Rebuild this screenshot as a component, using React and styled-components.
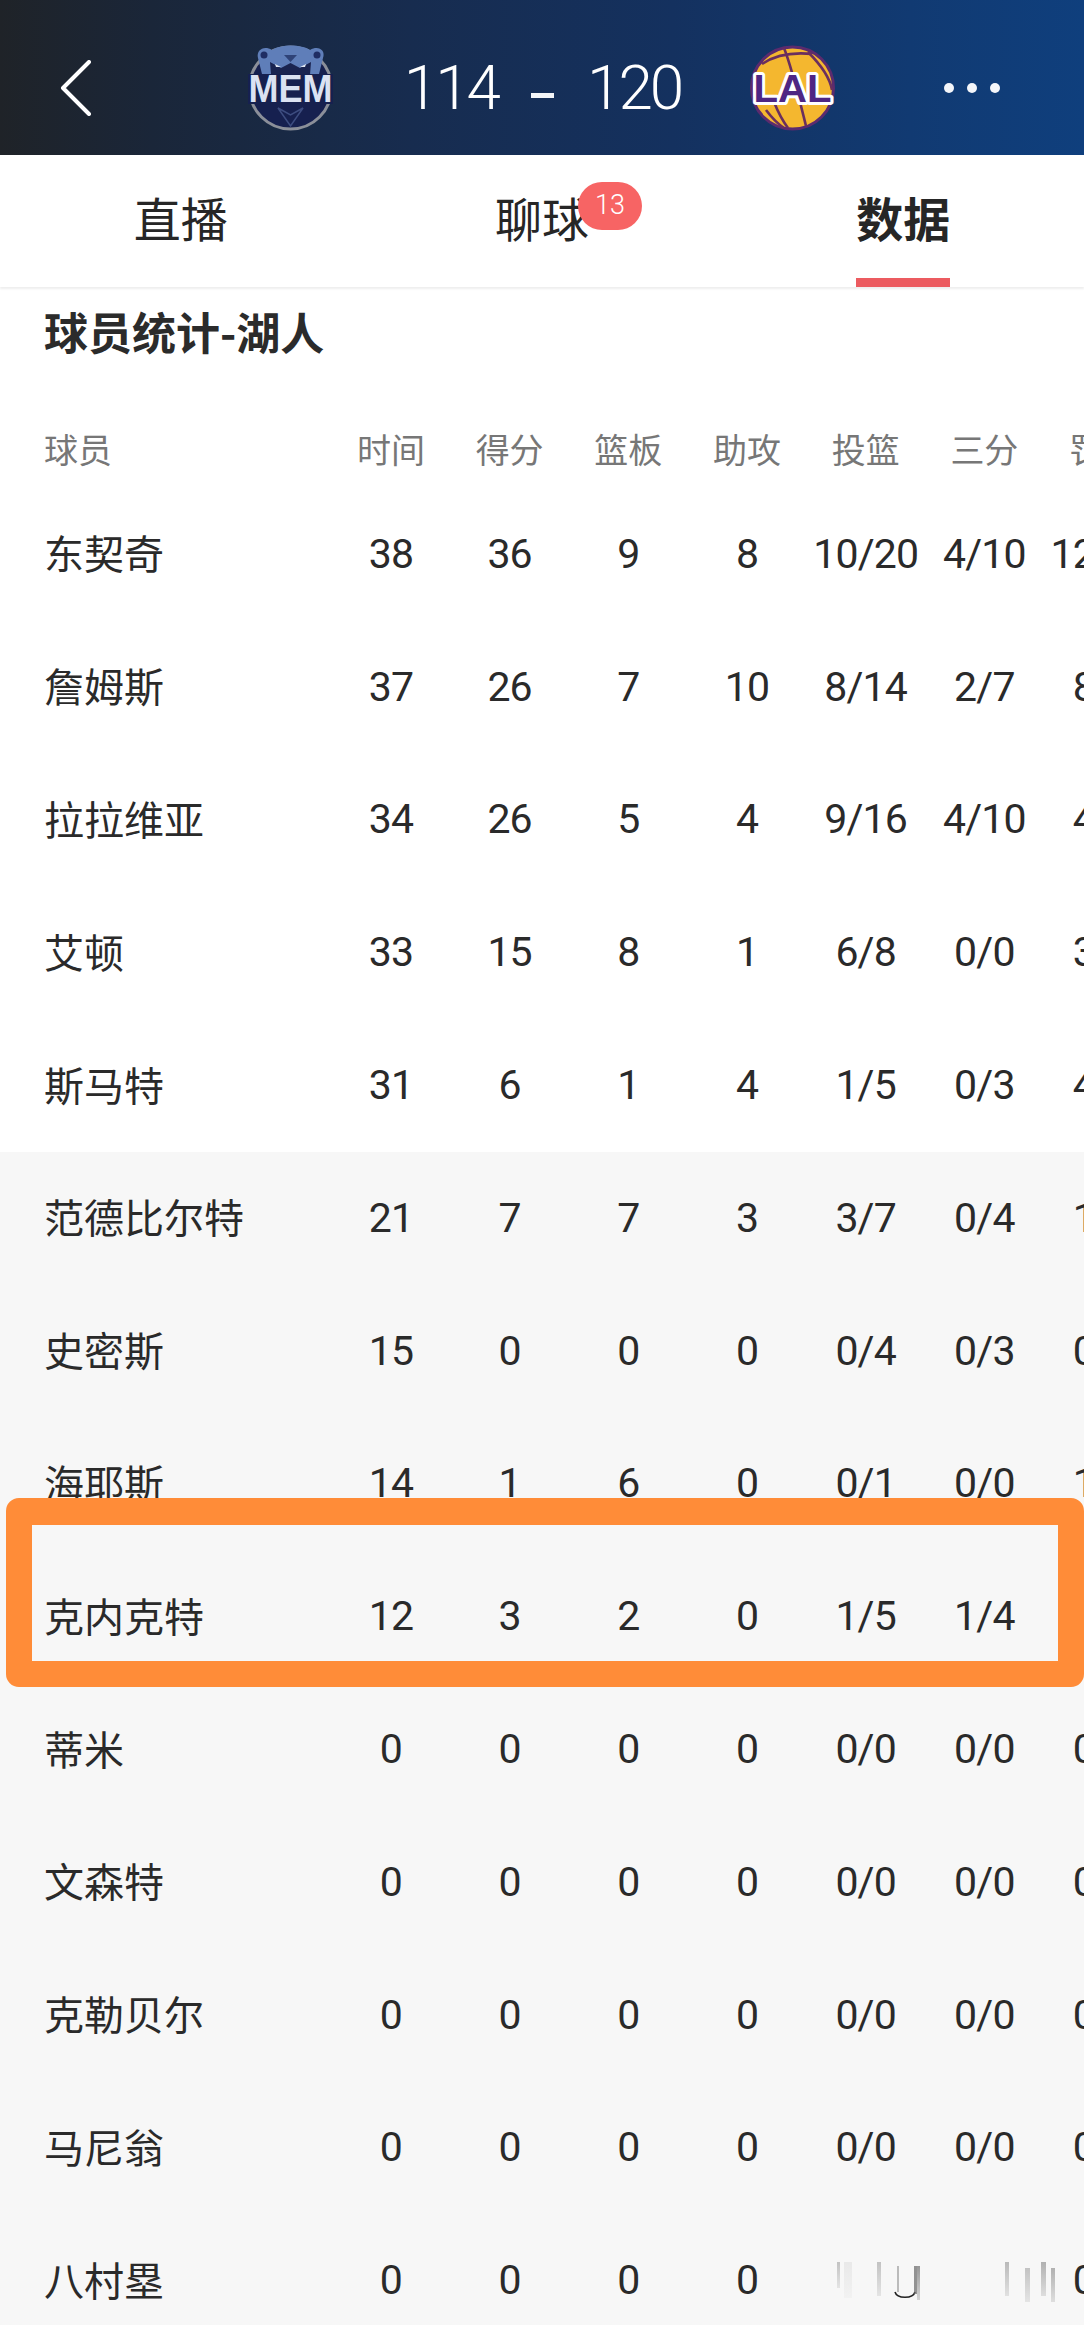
import React from "react";
import styled, { createGlobalStyle } from "styled-components";

const Global = createGlobalStyle`
  html, body { margin: 0; padding: 0; background: #fff; }
  body { font-family: Roboto, "Noto Sans CJK SC", sans-serif; }
`;

const CJK = `"Noto Sans CJK SC", "Noto Sans", sans-serif`;
const NUM = `Roboto, "Noto Sans CJK SC", sans-serif`;

const Page = styled.div`
  position: relative;
  width: 1084px;
  height: 2325px;
  overflow: hidden;
  background: #fff;
`;

const Header = styled.header`
  display: flex;
  align-items: center;
  height: 155px;
  box-sizing: border-box;
  padding-top: 21px;
  background: linear-gradient(90deg, #1f2328 0%, #1a2639 14%, #172c4f 38%, #14315f 62%, #113a72 84%, #0f3f7d 100%);
`;

const BackSlot = styled.div`
  flex: none;
  width: 248px;
  padding-left: 60px;
  box-sizing: border-box;
  display: flex;
  align-items: center;
`;

const Score = styled.div`
  flex: 1;
  display: flex;
  justify-content: center;
  align-items: center;
  gap: 33px;
  padding-left: 2px;
  color: #fff;
  font-family: ${NUM};
  font-weight: 300;
  font-size: 62px;
  line-height: 1;
  letter-spacing: -3px;
`;

const Dash = styled.span`
  display: block;
  width: 23px;
  height: 5px;
  margin-top: 14px;
  background: #f3f5f8;
`;

const MoreSlot = styled.div`
  flex: none;
  width: 249px;
  box-sizing: border-box;
  display: flex;
  gap: 13px;
  padding-left: 109px;
`;

const Dot = styled.span`
  width: 10px;
  height: 10px;
  border-radius: 50%;
  background: #f4f6fa;
`;

const LogoSlot = styled.div`
  flex: none;
  width: 85px;
  height: 92px;
`;

const Tabs = styled.nav`
  display: flex;
  height: 132px;
  background: #fff;
  box-shadow: 0 2px 2px #eeeeee;
  position: relative;
`;

const Tab = styled.div`
  flex: 1;
  display: flex;
  justify-content: center;
  position: relative;
  padding-top: 28px;
  font-family: ${CJK};
  font-size: 47px;
  line-height: 68px;
  font-weight: ${(p) => (p.$active ? 700 : 400)};
  color: #262626;
`;

const TabLabel = styled.span`
  position: relative;
  display: block;
  height: 104px;
`;

const Underline = styled.span`
  position: absolute;
  left: 0;
  right: 0;
  bottom: 0;
  height: 9px;
  background: #ec5b60;
`;

const Badge = styled.span`
  position: absolute;
  left: 83px;
  top: -1px;
  width: 64px;
  height: 48px;
  border-radius: 24px;
  background: #f76464;
  color: #fff;
  font-family: ${NUM};
  font-size: 27px;
  font-weight: 300;
  line-height: 46px;
  text-align: center;
`;

const Section = styled.h2`
  margin: 0;
  padding: 14px 0 0 44px;
  height: 94px;
  box-sizing: border-box;
  font-family: ${CJK};
  font-size: 44px;
  line-height: 60px;
  font-weight: 700;
  color: #2b2b2b;
`;

const Row = styled.div`
  display: grid;
  grid-template-columns: 287.6px repeat(7, 118.7px);
  align-items: center;
  box-sizing: border-box;
  padding-left: 44px;
  padding-top: ${(p) => (p.$head ? "28px" : "0")};
  width: max-content;
  height: ${(p) => (p.$head ? "107px" : "132.8px")};
`;

const Bench = styled.div`
  background: #f7f7f7;
`;

const Name = styled.div`
  font-family: ${CJK};
  font-size: 40px;
  line-height: 1;
  padding-bottom: 4px;
  color: #2a2a2a;
`;

const Stat = styled.div`
  text-align: center;
  font-family: ${NUM};
  font-size: 41px;
  line-height: 1;
  font-weight: 400;
  letter-spacing: -0.8px;
  color: #2a2a2a;
  white-space: nowrap;
`;

const HeadName = styled(Name)`
  font-size: 34px;
  padding-bottom: 0;
  color: #777;
`;

const HeadCell = styled(Stat)`
  font-family: ${CJK};
  font-size: 34px;
  letter-spacing: 0;
  color: #777;
`;

const Erased = styled.div`
  grid-column: span 2;
  height: 38px;
  margin-left: 23px;
  width: 234px;
`;

const Highlight = styled.div`
  position: absolute;
  left: 6px;
  right: 0;
  top: 1498px;
  height: 189px;
  box-sizing: border-box;
  border: solid #ff8c38;
  border-width: 27px 26px 26px 26px;
  border-radius: 13px;
  pointer-events: none;
`;

const Back = () => (
  <svg width="32" height="56" viewBox="0 0 32 56" fill="none">
    <path d="M29 2 L3 28 L29 54" stroke="#fff" strokeWidth="4" strokeLinecap="round" strokeLinejoin="round" />
  </svg>
);

const MemLogo = () => (
  <svg width="85" height="92" viewBox="0 0 85 92">
    <circle cx="42.5" cy="46" r="41" fill="#16204f" stroke="#8b8f99" strokeWidth="3" />
    <path d="M10 16 C8 8 16 3 24 8 C32 2 54 2 62 8 C70 3 78 8 75 16 L71 32 L14 32 Z" fill="#5f7eb9" />
    <circle cx="16" cy="13" r="3.5" fill="#1f2d63" />
    <circle cx="69" cy="13" r="3.5" fill="#1f2d63" />
    <path d="M22 20 L33 26 L42.5 21 L52 26 L63 20 L62 33 L23 33 Z" fill="#1a2450" />
    <path d="M36 13 H49 L42.5 20 Z" fill="#2f4378" />
    <path d="M27 22 L33 25 L28 25 Z M58 22 L52 25 L57 25 Z" fill="#dfe6f2" />
    <rect x="0" y="32" width="85" height="30" fill="#16204f" />
    <text x="42.5" y="60" textAnchor="middle" fontFamily="Liberation Sans" fontWeight="700" fontSize="38" fill="#dbe2f2" textLength="84" lengthAdjust="spacingAndGlyphs">MEM</text>
    <path d="M30 66 L42.5 84 L55 66 L42.5 73 Z" fill="none" stroke="#3d4d80" strokeWidth="1.5" />
  </svg>
);

const LalLogo = () => (
  <svg width="85" height="92" viewBox="0 0 85 92">
    <circle cx="42.5" cy="46" r="41" fill="#f4b72f" stroke="#5b2b6e" strokeWidth="3" />
    <g fill="none" stroke="#6a2f5e" strokeWidth="2.6">
      <path d="M12 22 C24 14 42 10 62 12" />
      <path d="M34 6 C42 26 50 60 56 84" />
      <path d="M58 10 C72 24 80 36 82 48" />
      <path d="M16 68 C22 76 28 82 34 86" />
      <path d="M24 60 C28 70 32 78 38 86" />
    </g>
    <text x="42.5" y="60" textAnchor="middle" fontFamily="Liberation Sans" fontWeight="700" fontSize="38" fill="#4f2683" stroke="#fff" strokeWidth="6" paintOrder="stroke" strokeLinejoin="round" textLength="78" lengthAdjust="spacingAndGlyphs">LAL</text>
  </svg>
);

const streaks = [
  [8, 3, 0.3, 0, 26],
  [15, 8, 0.08, 0, 36],
  [48, 4, 0.3, 0, 34],
  [88, 3, 0.55, 4, 34],
  [176, 4, 0.35, 0, 34],
  [196, 5, 0.3, 6, 34],
  [212, 5, 0.4, 0, 34],
  [222, 4, 0.4, 6, 34],
];

const Smudge = () => (
  <svg width="240" height="38" viewBox="0 0 240 38" style={{ overflow: "visible" }}>
    <defs>
      <linearGradient id="fade" x1="0" y1="0" x2="0" y2="1">
        <stop offset="0" stopColor="#444" stopOpacity="0.7" />
        <stop offset="1" stopColor="#444" stopOpacity="0.25" />
      </linearGradient>
    </defs>
    {streaks.map(([x, w, o, y, h]) => (
      <rect key={x} x={x} y={y} width={w} height={h} fill="url(#fade)" opacity={o * 1.4} />
    ))}
    <path d="M66 30 C68 37 84 37 86 30" fill="none" stroke="#222" strokeWidth="1.6" />
    <rect x="68" y="4" width="2" height="26" fill="#bbb" />
    <rect x="85" y="4" width="3" height="28" fill="#666" opacity="0.7" />
  </svg>
);

const cols = ["时间", "得分", "篮板", "助攻", "投篮", "三分", "罚球"];

const starters = [
  ["东契奇", 38, 36, 9, 8, "10/20", "4/10", "12/12"],
  ["詹姆斯", 37, 26, 7, 10, "8/14", "2/7", "8/8"],
  ["拉拉维亚", 34, 26, 5, 4, "9/16", "4/10", "4/4"],
  ["艾顿", 33, 15, 8, 1, "6/8", "0/0", "3/4"],
  ["斯马特", 31, 6, 1, 4, "1/5", "0/3", "4/4"],
];

const bench = [
  ["范德比尔特", 21, 7, 7, 3, "3/7", "0/4", "1/2"],
  ["史密斯", 15, 0, 0, 0, "0/4", "0/3", "0/0"],
  ["海耶斯", 14, 1, 6, 0, "0/1", "0/0", "1/2"],
  ["克内克特", 12, 3, 2, 0, "1/5", "1/4", "0/0"],
  ["蒂米", 0, 0, 0, 0, "0/0", "0/0", "0/0"],
  ["文森特", 0, 0, 0, 0, "0/0", "0/0", "0/0"],
  ["克勒贝尔", 0, 0, 0, 0, "0/0", "0/0", "0/0"],
  ["马尼翁", 0, 0, 0, 0, "0/0", "0/0", "0/0"],
];

const PlayerRow = ({ data }) => (
  <Row>
    <Name>{data[0]}</Name>
    {data.slice(1).map((v, i) => (
      <Stat key={i}>{v}</Stat>
    ))}
  </Row>
);

export default function App() {
  return (
    <Page>
      <Global />
      <Header>
        <BackSlot>
          <Back />
        </BackSlot>
        <LogoSlot>
          <MemLogo />
        </LogoSlot>
        <Score>
          <span>114</span>
          <Dash />
          <span>120</span>
        </Score>
        <LogoSlot>
          <LalLogo />
        </LogoSlot>
        <MoreSlot>
          <Dot />
          <Dot />
          <Dot />
        </MoreSlot>
      </Header>
      <Tabs>
        <Tab>
          <TabLabel>直播</TabLabel>
        </Tab>
        <Tab>
          <TabLabel>
            聊球
            <Badge>13</Badge>
          </TabLabel>
        </Tab>
        <Tab $active>
          <TabLabel>
            数据
            <Underline />
          </TabLabel>
        </Tab>
      </Tabs>
      <Section>球员统计-湖人</Section>
      <Row $head>
        <HeadName>球员</HeadName>
        {cols.map((c) => (
          <HeadCell key={c}>{c}</HeadCell>
        ))}
      </Row>
      {starters.map((d) => (
        <PlayerRow key={d[0]} data={d} />
      ))}
      <Bench>
        {bench.map((d) => (
          <PlayerRow key={d[0]} data={d} />
        ))}
        <Row>
          <Name>八村塁</Name>
          <Stat>0</Stat>
          <Stat>0</Stat>
          <Stat>0</Stat>
          <Stat>0</Stat>
          <Erased>
            <Smudge />
          </Erased>
          <Stat>0/0</Stat>
        </Row>
      </Bench>
      <Highlight />
    </Page>
  );
}
